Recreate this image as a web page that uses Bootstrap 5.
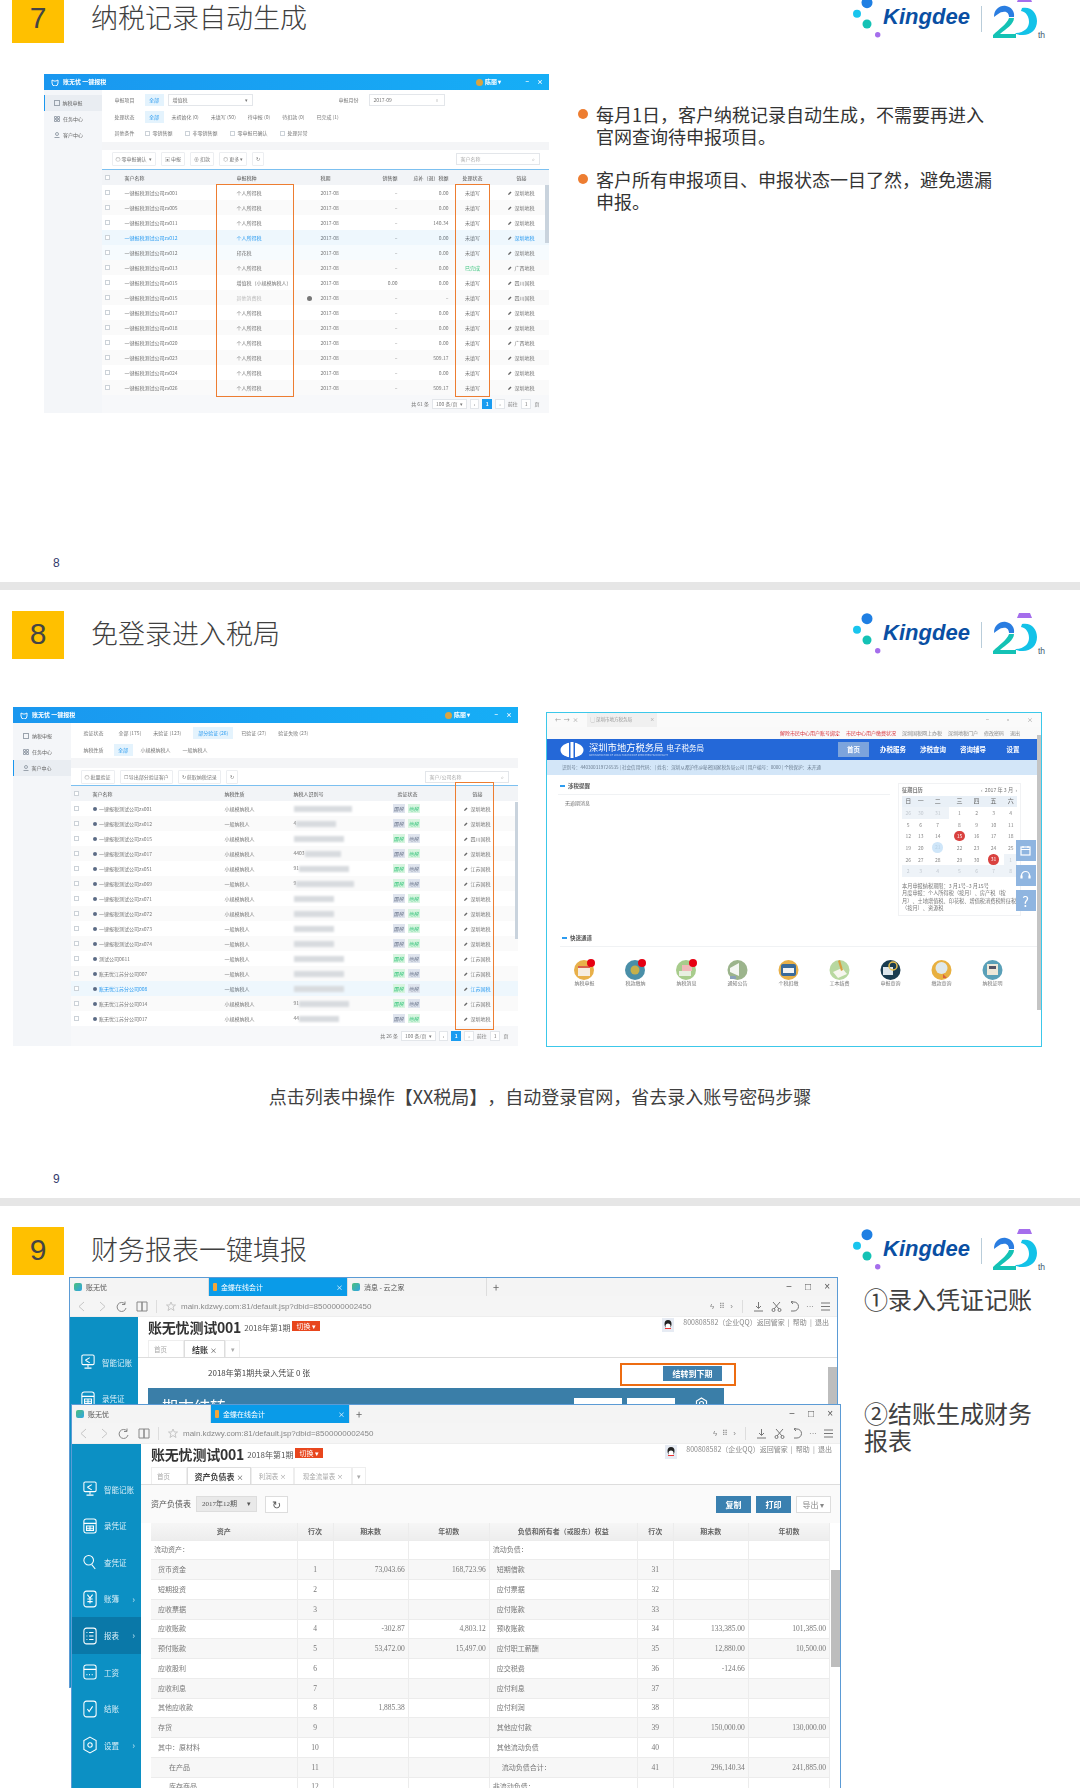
<!DOCTYPE html>
<html lang="zh-CN">
<head>
<meta charset="utf-8">
<title>Kingdee</title>
<link rel="stylesheet" href="https://cdn.jsdelivr.net/npm/bootstrap@5.3.0/dist/css/bootstrap.min.css">
<style>
html,body{background:#fff;margin:0;padding:0;overflow:hidden}
body{font-family:"Noto Sans CJK SC","Liberation Sans",sans-serif;color:#404040;text-spacing-trim:space-all}
.deck{margin-top:-26px}
.slide{height:616px;padding-top:21px;border-bottom:8px solid #e6e6e6;overflow:hidden}
.slide.last{height:582px;border-bottom:0}
.sq{width:52px;height:48px;margin-left:12px;background:#ffc000;color:#444;font:30px/46px "Liberation Sans",sans-serif;text-align:center;flex:none}
.ttl{margin:0 0 4px 27px;font-size:27px;font-weight:300;line-height:40px;color:#404040}
.logo{margin:-3px 34px 0 auto;height:41px;position:relative;left:-1px}
.kd{font:italic 700 22px/26px "Liberation Sans",sans-serif;color:#0a4fa3;margin:7px 0 0 1px;letter-spacing:0}
.lg-div{width:1px;height:26px;background:#b9cdda;margin:9px 11px 0 11px}
.lg-th{font:8.5px/10px "Liberation Sans",sans-serif;color:#3f5a70;margin:33px 0 0 1px}
.pno{font:12px/12px "Liberation Sans",sans-serif;color:#333a6b;margin:auto 0 13px 53px}
.s1 .shot{margin:31px 0 0 44px}
.blt{margin:60px 0 0 29px;width:418px;font-size:18px;line-height:22px;color:#333}
.blt li{position:relative;padding-left:18px;margin-bottom:21px}
.blt li::before{content:"";position:absolute;left:0;top:6px;width:10px;height:10px;border-radius:50%;background:#ed7d31}
.cap{margin:36px 0 0;font-size:18px;line-height:27px;text-align:center;color:#404040}
.shot{position:relative;overflow:hidden;background:#fff;color:#777;font-size:5px;line-height:1.2;filter:blur(.35px);flex:none}
.sa{width:505px;height:339px}
.sb{width:505px;height:340px;margin:48px 0 0 13px}
.sc{width:496px;height:335px;margin:53px 0 0 28px;border:1.5px solid #3cc8ea}
.bar1{height:16px;background:linear-gradient(90deg,#1a97ef,#16aef6);color:#fff;font-size:6px;font-weight:700;padding:0 6px 0 7px}
.bar1 .bico{width:8px;height:7px;fill:none;stroke:#fff;stroke-width:.9;margin-right:4px}
.bar1 .ava{width:7px;height:7px;border-radius:50%;background:#d9a441;margin:0 2px 0 auto}
.rail{width:57.5px;background:#f4f6f9;flex:none;padding-top:5px;color:#666}
.rail div{height:16px;display:flex;align-items:center;padding-left:10px;gap:3px}
.rail div.on{background:#e9edf2;border-left:1.5px solid #1a97ef;padding-left:8.5px}
.rail svg{width:6px;height:6px;fill:none;stroke:#9aa3ad}
.f-top{margin-top:2px}
.f-row{height:16.5px;display:flex;align-items:center;padding-left:13px;position:relative}
.f-row .lb{width:30px;color:#777}
.chip{background:#e4f3fd;color:#2d9cf0;padding:3px 0;width:19px;text-align:center;margin-right:8px}
.chip.wide{width:40px}
.f-row .it{margin-right:12px}
.inb{height:12px;border:1px solid #e3e6ea;padding:0 4px;display:flex;align-items:center;justify-content:space-between}
.ck{display:inline-block;width:5px;height:5px;border:.6px solid #ccd2d8;background:#fff;margin-right:3px;vertical-align:-.5px}
.gap-band{height:8px;background:#f4f5f7}
.gap-b2{height:10px}
.tb{height:20.7px;padding:0 10px;display:flex;align-items:center;gap:5px;border-bottom:.7px solid #7cc0f0}
.btn.mk{--bs-btn-padding-x:3px;--bs-btn-padding-y:0;--bs-btn-font-size:5px;--bs-btn-border-color:#eceef1;--bs-btn-color:#777;--bs-btn-border-radius:1px;--bs-btn-line-height:12px;--bs-btn-border-width:1px;height:14px;white-space:nowrap}
.srch{margin-left:auto;width:84px;height:12px;border:1px solid #e3e6ea;padding:0 4px;color:#aaa;display:flex;align-items:center;justify-content:space-between}
.tx{--bs-table-bg:transparent;table-layout:fixed;width:100%;margin:0;font-size:5px;color:#777}
.tx th,.tx td{height:15px;padding:0 3px;border:0;vertical-align:middle;white-space:nowrap;font-weight:400;overflow:hidden}
.tx thead th{background:#f2f4f7;color:#555}
.tx tbody tr:nth-child(even) td{background:#fafafa}
.tx tbody tr.hl td{background:#eef7fd;color:#2d9cf0}
.tx tbody tr.hl2 td{background:#f6fbfe}
.a1{width:20px}.a2{width:112px}.a3{width:82px}.a4{width:56px}.a5{width:29px}.a6{width:51px}.a7{width:42px}.a8{width:56px}
.b1{width:19px}.b2{width:132px}.b3{width:69px}.b4{width:88px}.b5{width:58px}.b6{width:82px}
.pl5{padding-left:5px!important}
.pen{width:4px;height:4px;fill:#666;margin-right:2px;vertical-align:-.5px}
.ok{color:#3cc57f}
.gdot{float:right;width:5px;height:5px;border-radius:50%;background:#777;margin:1px 1px 0 0}
.idot{display:inline-block;width:4.5px;height:4.5px;border-radius:50%;background:#5b6b85;margin-right:2px;vertical-align:-.5px}
.mask{display:inline-block;height:6px;background:#d8dbdf;filter:blur(1.2px);vertical-align:middle}
.m40{width:40px}.m50{width:50px}.m58{width:58px}.m36{width:36px}
.tg{display:inline-block;width:12px;height:9px;line-height:9px;text-align:center;margin-right:3px;background:#dfe4ee;color:#6f7a90}
.tg.g{background:#d8f5e0;color:#3cc57f}
.foot{background:#f7f8fa;height:18px;padding-right:10px;gap:3px}
.sb .foot{height:20px}
.foot .box{height:10px;border:1px solid #e3e6ea;background:#fff;padding:0 3px;display:flex;align-items:center}
.foot .cur{height:10px;width:10px;background:#1a9cf0;color:#fff;text-align:center;line-height:10px;font-weight:700}
.orng{position:absolute;border:1.5px solid #ed7d31;pointer-events:none}
.sbar{position:absolute;background:#c9d3dd}
.o1{left:172px;top:110px;width:77.5px;height:213px}
.o2{left:411px;top:110px;width:34.6px;height:213px}
.o3{left:442px;top:75px;width:39px;height:248px}
.sb1{right:0;top:111px;width:4px;height:58px}
.sb2{right:0;top:95px;width:3.5px;height:137px}
.r-chrome{height:14px;padding:0 8px;background:#fafafa;font-size:6px;color:#999}
.r-tab{width:70px;height:14px;background:#f0f0f0;margin-left:9px;padding:0 3px;display:flex;align-items:center;justify-content:space-between;font-size:4.5px}
.r-links{height:12px;padding-right:21px;gap:6px;background:#f9f9f9;font-size:5px;color:#888}
.r-links b{font-weight:400;color:#d9363e}
.r-nav{height:21px;background:#2468d8;color:#fff;padding-left:13px}
.r-em{width:24px;height:16px;margin-right:5px}
.r-t1{font-size:9.3px;line-height:10px;white-space:nowrap}
.r-t1 small{font-size:7.5px;margin-left:3px}
.r-en{font-size:2.5px;line-height:4px;opacity:.7;white-space:nowrap}
.r-it{width:40px;text-align:center;font-size:6.5px;font-weight:700;line-height:21px;flex:none}
.r-it.cur{background:#7ca4dc;margin:0 4px;width:31px;line-height:15px;height:15px}
.r-info{height:15px;background:#d3e6f8;padding-left:15px;font-size:4.6px;color:#6d7f92;white-space:nowrap}
.r-hd{font-size:5.5px;font-weight:700;color:#555;padding:0 0 0 2px;height:12px;border-bottom:1px solid #f0f2f4}
.r-hd i{display:inline-block;width:5px;height:2px;background:#2d9cf0;margin-right:3px;vertical-align:1px}
.r-left{padding:8px 0 0 11px}
.r-empty{padding:5px 0 0 7px}
.calw{width:123px;height:133px;margin:8px 20px 0 8px;border:1px solid #f1f2f4;padding:2px 3px;font-size:5.2px;flex:none;line-height:1.45}
.cal{width:100%;margin:2px 0 5px;font-size:5px;color:#888;--bs-table-bg:transparent}
.cal th,.cal td{padding:0;height:11.6px;text-align:center;border:0;font-weight:400;vertical-align:middle}
.cal th{background:#e9f0f7;font-size:6px;color:#666}
.cal td.m{background:#eef3f8;color:#c2c8cf}
.cal td span{display:inline-block;width:10.5px;height:10.5px;line-height:10.5px;border-radius:50%}
.cal td .rd{background:#d9413f;color:#fff}
.cal td .bl{background:#cfe6f9;color:#b9d2e6}
.qk{padding-left:13px;margin-top:19px}
.q-it{width:51px;text-align:center;flex:none;font-size:5px;color:#777;padding-top:12px}
.q-it svg{width:21px;height:21px;display:block;margin:0 auto}
.q-row{margin-left:-1px}
.flt{position:absolute;right:5.5px;width:20px;height:21px;background:#8fb5e0;color:#fff;display:flex;align-items:center;justify-content:center;font-size:14px;line-height:1}
.flt svg{width:11px;height:11px;fill:none;stroke:#fff;stroke-width:1.2}
.f1{top:127px}.f2{top:152px}.f3{top:177px}
.sb3{right:0;top:22px;width:4.5px;height:275px;background:#c4c4c4}
.wins{width:772px;margin:2px 0 0 69px;flex:none}
.win{position:relative;overflow:hidden;background:#fff;border:1px solid #5b9bd5;color:#666;filter:blur(.25px);width:769px}
.w1{height:411px}
.w2{margin:-284px 0 0 2px;width:770px}
.w2 .w-sd{width:69px}
.w-tabs{height:18px;background:#f4f4f4;font-size:7px;color:#555}
.w-tab{height:18px;padding:0 4px;width:139px;display:flex;align-items:center;gap:4px;border-right:1px solid #ddd;flex:none}
.w-tab.cur{background:#0a9be8;color:#fff;justify-content:space-between}
.w-tab em{font-style:normal;margin-left:auto}
.w-ic{width:8px;height:8px;border-radius:2px;background:linear-gradient(135deg,#4cbf7a,#2fa5e6);flex:none}
.w-ic.or{background:#f3a638;width:4px;border-radius:1px;margin-right:4px}
.w-plus{font-size:11px;line-height:18px;padding-left:6px;color:#666}
.w-ctl{margin-left:auto;gap:13px;padding-right:7px;font:10px/18px "Liberation Sans",sans-serif;color:#555}
.w-addr{height:21px;background:#f5f5f5;border-bottom:1px solid #eee;padding-left:2px;font:8px "Liberation Sans",sans-serif;color:#888;white-space:nowrap}
.w-addr>svg{width:20px;height:11px;fill:none;stroke:#888;stroke-width:1;flex:none}
.w-addr>svg.lt{stroke:#c6c6c6}
.w-addr .sp{width:1px;height:13px;background:#ddd;margin:0 4px}
.w-tools{margin-left:auto;gap:5px;padding-right:5px}
.w-tools svg{width:13px;height:11px;fill:none;stroke:#777;stroke-width:1}
.w-sd{width:68px;background:#0c90c4;flex:none;padding-top:27px;color:#d9eef7;font-size:7.5px}
.w-it{height:36.6px;display:flex;align-items:center;padding-left:11px;gap:7px;position:relative;white-space:nowrap}
.w-it.cur{background:#0a78a8}
.w-it svg{width:14px;height:18px;fill:none;stroke:#fff;stroke-width:1.2;flex:none}
.w-it u{position:absolute;right:6px;top:12px;text-decoration:none;font-size:9px;color:#bfe3f2}
.w-mn{min-width:0}
.w-hd{height:23px;padding-left:10px}
.w-nm{font-size:14px;font-weight:700;color:#333;white-space:nowrap;letter-spacing:-.2px;line-height:20px}
.w-pd{font-size:8px;margin:5px 2px 0 3px;color:#555;white-space:nowrap}
.w-sw{background:#e8461d;color:#fff;font-size:7px;height:10px;line-height:10px;padding:0 4px;margin-top:4px;white-space:nowrap}
.w-qq{width:12px;height:14px;margin:1px 9px 0 auto}
.w-lk{font-size:7px;line-height:11px;color:#888;padding-right:8px;margin-top:0;white-space:nowrap}
.w-tb{height:18px;padding-left:10px;border-bottom:1px solid #ddd;font-size:6.5px;color:#aaa}
.w-t{width:36px;height:17px;line-height:17px;text-align:center;border:1px solid #eee;border-bottom:0;background:#fff;white-space:nowrap;flex:none}
.w-t.fst{text-align:left;padding-left:5px}
.w-t.cur{font-size:8px;font-weight:700;color:#444;border-color:#ddd}
.w1 .w-body{height:30px;padding:0 0 0 70px;font-size:8px;color:#444}
.w-go{width:59px;height:15px;margin:1px 115px 0 auto;background:#3f80ad;color:#fff;font-size:8px;font-weight:700;text-align:center;line-height:15px}
.w-pan{margin-left:10px;width:576px;height:40px;background:#3a7ea8;color:#fff;font-size:16px;padding:6px 14px;position:relative}
.w-pan span{position:absolute;top:10px;width:48px;height:30px;background:#fff}
.w-pan svg{position:absolute;left:547px;top:9px;width:13px;height:13px;fill:none;stroke:#fff;stroke-width:1.2}
.o4{left:550px;top:85px;width:116px;height:23px;border:2px solid #ed6c11}
.w-sc{position:absolute;right:0;width:9px;background:#bdbdbd}
.w-sc1{top:89px;height:40px}
.w-sc2{top:126px;height:97px}
.w-t2{padding:0 0 0 10px;height:38px;background:#fafafa;font-size:8px;color:#555}
.w-sel{width:61px;height:16px;margin-left:5px;background:#e9e9e9;border:1px solid #ddd;font:7px/14px "Liberation Serif","Noto Sans CJK SC",serif;padding:0 5px;display:flex;justify-content:space-between;white-space:nowrap}
.w-rf{width:23px;height:17px;margin-left:8px;border:1px solid #ddd;background:#fff;text-align:center;line-height:15px;font-size:11px}
.w-b{width:35px;height:17px;line-height:17px;background:#3a80b0;color:#fff;text-align:center;font-weight:700;margin-left:5px}
.w-b.wt{background:#fff;border:1px solid #ddd;color:#888;font-weight:400;line-height:15px;margin-right:9px}
.fs{--bs-table-bg:transparent;table-layout:fixed;width:679px;margin:0 0 0 10px;font-size:7px;color:#777}
.fs th,.fs td{height:19.75px;padding:0 3px;border:1px solid #ececec;border-width:0 1px 1px 0;vertical-align:middle;white-space:nowrap;font-weight:400;line-height:1}
.fs th{height:17px;background:linear-gradient(#f6f6f6,#ededed);text-align:center;font-weight:700;color:#666}
.fs tbody tr:nth-child(even) td{background:#f7f7f7}
.fs td.n{text-align:right;font:7.5px "Liberation Serif",serif}
.fs td.l{text-align:center;font:7.5px "Liberation Serif",serif}
.fs .i1{padding-left:7px}.fs .i2{padding-left:18px}.fs .i3{padding-left:12px}
.c1{width:146px}.c2{width:36px}.c3{width:75px}.c4{width:81px}.c5{width:148px}
.side{margin-left:23px;padding-top:10px;width:172px;font-size:24px;line-height:27px;color:#404040}
.side p{margin:0 0 87px}
</style>
</head>
<body>
<svg class="d-none" xmlns="http://www.w3.org/2000/svg">
<symbol id="dots" viewBox="0 0 30 41"><circle cx="15" cy="5.7" r="5.5" fill="#1f7fe3"/><circle cx="5" cy="16.7" r="4" fill="#19c5ee"/><circle cx="15" cy="27" r="4.5" fill="#14c2b5"/><circle cx="25.7" cy="37.7" r="2.7" fill="#a56eec"/></symbol>
<symbol id="twenty" viewBox="0 0 44 41"><path d="M26 0h11l2 5H24z" fill="#a56eec"/><path d="M1 20C1 12 7 8 13 9c5 1 9 5 8 11l-5 0c0-3-2-6-6-5-3 0-5 2-9 5z" fill="#2a7de1"/><path d="M21 21c0 6-8 11-14 16h16v4H0v-3c6-6 14-11 16-17z" fill="#14c2b5"/><path d="M29 11c9-2 15 5 15 13 0 9-7 15-16 14-3 0-5-1-6-2 9 0 14-5 14-11 0-6-3-10-8-11z" fill="#13c2e8"/></symbol>
<symbol id="pn" viewBox="0 0 8 8"><path d="M0 8l1-3 4-4 2 2-4 4z"/></symbol>
<symbol id="bc" viewBox="0 0 8 7"><path d="M1 1l2 1h2l2-1v3a3 3 0 0 1-6 0zM3 4h0M5 4h0"/></symbol>
<symbol id="mn1" viewBox="0 0 16 20"><rect x="1" y="2" width="14" height="11" rx="1.5"/><path d="M8 13v3M4 17h8M5 8l5-3M5 8l5 3"/></symbol>
<symbol id="mn2" viewBox="0 0 16 20"><rect x="1" y="2" width="14" height="16" rx="2.5"/><path d="M1 7h14M4 10h8v5H4zM4 12.500h8M8 10v5"/></symbol>
<symbol id="mn3" viewBox="0 0 16 20"><circle cx="6.500" cy="8" r="5.500"/><path d="M10 13l4 5"/></symbol>
<symbol id="mn4" viewBox="0 0 16 20"><rect x="1" y="1" width="14" height="18" rx="3"/><path d="M5 5l3 4 3-4M8 9v6M5 10h6M5 13h6"/></symbol>
<symbol id="mn5" viewBox="0 0 16 20"><rect x="1" y="1" width="14" height="18" rx="3"/><path d="M4 6h1M7 6h5M4 10h1M7 10h5M4 14h1M7 14h5"/></symbol>
<symbol id="mn6" viewBox="0 0 16 20"><rect x="1" y="2" width="14" height="16" rx="2.500"/><path d="M1 7h14M4 13h1M7 13h1M10 13h1"/></symbol>
<symbol id="mn7" viewBox="0 0 16 20"><rect x="1" y="1" width="14" height="18" rx="3"/><path d="M5 10l2 3 4-6"/></symbol>
<symbol id="mn8" viewBox="0 0 16 20"><path d="M8 1l7 4v10l-7 4-7-4V5z"/><circle cx="8" cy="10" r="2.500"/></symbol>
<symbol id="nav-l" viewBox="0 0 20 11"><path d="M12 1L7 5.500l5 4.500"/></symbol>
<symbol id="nav-r" viewBox="0 0 20 11"><path d="M8 1l5 4.500L8 10"/></symbol>
<symbol id="nav-c" viewBox="0 0 20 11"><path d="M13 3a4.500 4.500 0 1 0 1 4M13 .5V3.500h-3"/></symbol>
<symbol id="nav-b" viewBox="0 0 20 11"><path d="M5 1h5v9H5zM10 1h5v9h-5z"/></symbol>
<symbol id="nav-s" viewBox="0 0 20 11"><path d="M10 1l1.300 3h3.200l-2.500 2 1 3.500-3-2-3 2 1-3.500-2.500-2h3.200z"/></symbol>
<symbol id="t-dl" viewBox="0 0 13 11"><path d="M6.500 1v6M4 5l2.500 2.500L9 5M2 10h9"/></symbol>
<symbol id="t-cut" viewBox="0 0 13 11"><path d="M3 1l6 7M10 1L4 8"/><circle cx="3.500" cy="9" r="1.500"/><circle cx="9.500" cy="9" r="1.500"/></symbol>
<symbol id="t-un" viewBox="0 0 13 11"><path d="M3 1h3a4 4 0 0 1 0 9H3M3 1l2-1M3 1l2 2"/></symbol>
<symbol id="t-mn" viewBox="0 0 13 11"><path d="M2 2h9M2 5.500h9M2 9h9"/></symbol>
</svg>

<div class="deck">

<section class="slide s1 d-flex flex-column">
  <header class="d-flex align-items-center">
    <div class="sq">7</div><h1 class="ttl">纳税记录自动生成</h1>
    <div class="logo d-flex align-items-start"><svg width="30" height="41"><use href="#dots"/></svg><span class="kd">Kingdee</span><i class="lg-div"></i><svg width="44" height="41"><use href="#twenty"/></svg><span class="lg-th">th</span></div>
  </header>
  <div class="d-flex align-items-start">
    <div class="shot sa">
      <div class="bar1 d-flex align-items-center"><svg class="bico"><use href="#bc"/></svg><span>账无忧 一键报税</span><i class="ava"></i><span>陈丽 ▾</span><span class="ms-4">−</span><span class="ms-2">×</span></div>
      <div class="d-flex">
        <div class="rail"><div class="on"><svg viewBox="0 0 6 6"><rect x=".5" y=".5" width="5" height="5"/></svg>纳税申报</div><div><svg viewBox="0 0 6 6"><path d="M.5.500h2v2h-2zM3.500.500h2v2h-2zM.5 3.500h2v2h-2zM3.500 3.500h2v2h-2z"/></svg>任务中心</div><div><svg viewBox="0 0 6 6"><circle cx="3" cy="2" r="1.500"/><path d="M.5 5.500h5"/></svg>客户中心</div></div>
        <div class="flex-fill">
          <div class="f-row f-top"><span class="lb">申报项目</span><span class="chip">全部</span><div class="inb" style="width:85px;margin-left:-4px"><span>增值税</span><span>▾</span></div><span class="lb" style="margin-left:auto">申报月份</span><div class="inb" style="width:76px;margin-right:105px"><span>2017-09</span><span>▫</span></div></div>
          <div class="f-row"><span class="lb">处理状态</span><span class="chip">全部</span><span class="it">未初始化 (0)</span><span class="it">未填写 (50)</span><span class="it">待申报 (0)</span><span class="it">待扣款 (0)</span><span class="it">已完成 (1)</span></div>
          <div class="f-row"><span class="lb">其他条件</span><span class="it"><i class="ck"></i>零销售额</span><span class="it"><i class="ck"></i>非零销售额</span><span class="it"><i class="ck"></i>零申报已确认</span><span class="it"><i class="ck"></i>处理异常</span></div>
          <div class="gap-band"></div>
          <div class="tb"><span class="btn mk">◎ 零申报确认 &nbsp;▾</span><span class="btn mk">▣ 申报</span><span class="btn mk">⊕ 扣款</span><span class="btn mk">◎ 更多 ▾</span><span class="btn mk">↻</span><div class="srch"><span>客户名称</span><span>⌕</span></div></div>
          <table class="table tx">
            <colgroup><col class="a1"><col class="a2"><col class="a3"><col class="a4"><col class="a5"><col class="a6"><col class="a7"><col class="a8"></colgroup>
            <thead><tr><th><i class="ck"></i></th><th>客户名称</th><th>申报税种</th><th class="pl5">税期</th><th class="text-end">销售额</th><th class="text-end">应补（退）税额</th><th class="text-center">处理状态</th><th class="text-center">链接</th></tr></thead>
            <tbody>
            <tr><td><i class="ck"></i></td><td>一键报税测试公司zs001</td><td>个人所得税</td><td class="pl5">2017-08</td><td class="text-end">–</td><td class="text-end">0.00</td><td class="text-center">未填写</td><td class="text-center"><svg class="pen"><use href="#pn"/></svg>深圳地税</td></tr>
            <tr><td><i class="ck"></i></td><td>一键报税测试公司zs005</td><td>个人所得税</td><td class="pl5">2017-08</td><td class="text-end">–</td><td class="text-end">0.00</td><td class="text-center">未填写</td><td class="text-center"><svg class="pen"><use href="#pn"/></svg>深圳地税</td></tr>
            <tr><td><i class="ck"></i></td><td>一键报税测试公司zs011</td><td>个人所得税</td><td class="pl5">2017-08</td><td class="text-end">–</td><td class="text-end">140.34</td><td class="text-center">未填写</td><td class="text-center"><svg class="pen"><use href="#pn"/></svg>深圳地税</td></tr>
            <tr class="hl"><td><i class="ck"></i></td><td>一键报税测试公司zs012</td><td>个人所得税</td><td class="pl5 text-secondary">2017-08</td><td class="text-end text-secondary">–</td><td class="text-end text-secondary">0.00</td><td class="text-center text-secondary">未填写</td><td class="text-center"><svg class="pen"><use href="#pn"/></svg>深圳地税</td></tr>
            <tr class="hl2"><td><i class="ck"></i></td><td>一键报税测试公司zs012</td><td>印花税</td><td class="pl5">2017-08</td><td class="text-end">–</td><td class="text-end">0.00</td><td class="text-center">未填写</td><td class="text-center"><svg class="pen"><use href="#pn"/></svg>深圳地税</td></tr>
            <tr><td><i class="ck"></i></td><td>一键报税测试公司zs013</td><td>个人所得税</td><td class="pl5">2017-08</td><td class="text-end">–</td><td class="text-end">0.00</td><td class="text-center ok">已完成</td><td class="text-center"><svg class="pen"><use href="#pn"/></svg>广西地税</td></tr>
            <tr><td><i class="ck"></i></td><td>一键报税测试公司zs015</td><td>增值税（小规模纳税人）</td><td class="pl5">2017-08</td><td class="text-end">0.00</td><td class="text-end">0.00</td><td class="text-center">未填写</td><td class="text-center"><svg class="pen"><use href="#pn"/></svg>四川国税</td></tr>
            <tr><td><i class="ck"></i></td><td>一键报税测试公司zs015</td><td><i class="gdot"></i><span class="opacity-50">其他消费税</span></td><td class="pl5">2017-08</td><td class="text-end">–</td><td class="text-end">–</td><td class="text-center">未填写</td><td class="text-center"><svg class="pen"><use href="#pn"/></svg>四川国税</td></tr>
            <tr><td><i class="ck"></i></td><td>一键报税测试公司zs017</td><td>个人所得税</td><td class="pl5">2017-08</td><td class="text-end">–</td><td class="text-end">0.00</td><td class="text-center">未填写</td><td class="text-center"><svg class="pen"><use href="#pn"/></svg>深圳地税</td></tr>
            <tr><td><i class="ck"></i></td><td>一键报税测试公司zs018</td><td>个人所得税</td><td class="pl5">2017-08</td><td class="text-end">–</td><td class="text-end">0.00</td><td class="text-center">未填写</td><td class="text-center"><svg class="pen"><use href="#pn"/></svg>深圳地税</td></tr>
            <tr><td><i class="ck"></i></td><td>一键报税测试公司zs020</td><td>个人所得税</td><td class="pl5">2017-08</td><td class="text-end">–</td><td class="text-end">0.00</td><td class="text-center">未填写</td><td class="text-center"><svg class="pen"><use href="#pn"/></svg>广西地税</td></tr>
            <tr><td><i class="ck"></i></td><td>一键报税测试公司zs023</td><td>个人所得税</td><td class="pl5">2017-08</td><td class="text-end">–</td><td class="text-end">509.17</td><td class="text-center">未填写</td><td class="text-center"><svg class="pen"><use href="#pn"/></svg>深圳地税</td></tr>
            <tr><td><i class="ck"></i></td><td>一键报税测试公司zs024</td><td>个人所得税</td><td class="pl5">2017-08</td><td class="text-end">–</td><td class="text-end">0.00</td><td class="text-center">未填写</td><td class="text-center"><svg class="pen"><use href="#pn"/></svg>深圳地税</td></tr>
            <tr><td><i class="ck"></i></td><td>一键报税测试公司zs026</td><td>个人所得税</td><td class="pl5">2017-08</td><td class="text-end">–</td><td class="text-end">509.17</td><td class="text-center">未填写</td><td class="text-center"><svg class="pen"><use href="#pn"/></svg>深圳地税</td></tr>
            </tbody>
          </table>
          <div class="foot d-flex align-items-center justify-content-end"><span>共 61 条</span><span class="box">100 条/页 &nbsp;▾</span><span class="box">‹</span><span class="cur">1</span><span class="box">›</span><span>前往</span><span class="box">1</span><span>页</span></div>
        </div>
      </div>
      <i class="orng o1"></i><i class="orng o2"></i><i class="sbar sb1"></i>
    </div>
    <ul class="blt list-unstyled">
      <li>每月1日，客户纳税记录自动生成，不需要再进入官网查询待申报项目。</li>
      <li>客户所有申报项目、申报状态一目了然，避免遗漏申报。</li>
    </ul>
  </div>
  <div class="pno">8</div>
</section>

<section class="slide s2 d-flex flex-column">
  <header class="d-flex align-items-center">
    <div class="sq">8</div><h1 class="ttl">免登录进入税局</h1>
    <div class="logo d-flex align-items-start"><svg width="30" height="41"><use href="#dots"/></svg><span class="kd">Kingdee</span><i class="lg-div"></i><svg width="44" height="41"><use href="#twenty"/></svg><span class="lg-th">th</span></div>
  </header>
  <div class="d-flex align-items-start">
    <div class="shot sb">
      <div class="bar1 d-flex align-items-center"><svg class="bico"><use href="#bc"/></svg><span>账无忧 一键报税</span><i class="ava"></i><span>陈丽 ▾</span><span class="ms-4">−</span><span class="ms-2">×</span></div>
      <div class="d-flex">
        <div class="rail"><div><svg viewBox="0 0 6 6"><rect x=".5" y=".5" width="5" height="5"/></svg>纳税申报</div><div><svg viewBox="0 0 6 6"><path d="M.5.500h2v2h-2zM3.500.500h2v2h-2zM.5 3.500h2v2h-2zM3.500 3.500h2v2h-2z"/></svg>任务中心</div><div class="on"><svg viewBox="0 0 6 6"><circle cx="3" cy="2" r="1.500"/><path d="M.5 5.500h5"/></svg>客户中心</div></div>
        <div class="flex-fill">
          <div class="f-row f-top"><span class="lb" style="width:35px">验证状态</span><span class="it">全部 (175)</span><span class="it">未验证 (123)</span><span class="chip wide">部分验证 (26)</span><span class="it">已验证 (27)</span><span class="it">验证失败 (23)</span></div>
          <div class="f-row"><span class="lb">纳税性质</span><span class="chip">全部</span><span class="it">小规模纳税人</span><span class="it">一般纳税人</span></div>
          <div class="gap-band gap-b2"></div>
          <div class="tb" style="height:18px"><span class="btn mk">◎ 批量验证</span><span class="btn mk">☐ 导出部分验证客户</span><span class="btn mk">↻ 获取纳税记录</span><span class="btn mk">↻</span><div class="srch"><span>客户/公司名称</span><span>⌕</span></div></div>
          <table class="table tx">
            <colgroup><col class="b1"><col class="b2"><col class="b3"><col class="b4"><col class="b5"><col class="b6"></colgroup>
            <thead><tr><th><i class="ck"></i></th><th>客户名称</th><th>纳税性质</th><th>纳税人识别号</th><th class="text-center">验证状态</th><th class="text-center">链接</th></tr></thead>
            <tbody>
            <tr><td><i class="ck"></i></td><td><i class="idot"></i>一键报税测试公司zs001</td><td>小规模纳税人</td><td><i class="mask m58"></i></td><td class="text-center"><i class="tg">国税</i><i class="tg g">地税</i></td><td class="text-center"><svg class="pen"><use href="#pn"/></svg>深圳地税</td></tr>
            <tr><td><i class="ck"></i></td><td><i class="idot"></i>一键报税测试公司zs012</td><td>一般纳税人</td><td>4<i class="mask m40"></i></td><td class="text-center"><i class="tg">国税</i><i class="tg g">地税</i></td><td class="text-center"><svg class="pen"><use href="#pn"/></svg>深圳地税</td></tr>
            <tr><td><i class="ck"></i></td><td><i class="idot"></i>一键报税测试公司zs015</td><td>小规模纳税人</td><td><i class="mask m50"></i></td><td class="text-center"><i class="tg g">国税</i><i class="tg">地税</i></td><td class="text-center"><svg class="pen"><use href="#pn"/></svg>四川国税</td></tr>
            <tr><td><i class="ck"></i></td><td><i class="idot"></i>一键报税测试公司zs017</td><td>小规模纳税人</td><td>4403<i class="mask m36"></i></td><td class="text-center"><i class="tg">国税</i><i class="tg g">地税</i></td><td class="text-center"><svg class="pen"><use href="#pn"/></svg>深圳地税</td></tr>
            <tr><td><i class="ck"></i></td><td><i class="idot"></i>一键报税测试公司zs051</td><td>小规模纳税人</td><td>91<i class="mask m50"></i></td><td class="text-center"><i class="tg g">国税</i><i class="tg">地税</i></td><td class="text-center"><svg class="pen"><use href="#pn"/></svg>江苏国税</td></tr>
            <tr><td><i class="ck"></i></td><td><i class="idot"></i>一键报税测试公司zs069</td><td>一般纳税人</td><td>9<i class="mask m58"></i></td><td class="text-center"><i class="tg g">国税</i><i class="tg">地税</i></td><td class="text-center"><svg class="pen"><use href="#pn"/></svg>江苏国税</td></tr>
            <tr><td><i class="ck"></i></td><td><i class="idot"></i>一键报税测试公司zs071</td><td>小规模纳税人</td><td><i class="mask m40"></i></td><td class="text-center"><i class="tg">国税</i><i class="tg g">地税</i></td><td class="text-center"><svg class="pen"><use href="#pn"/></svg>深圳地税</td></tr>
            <tr><td><i class="ck"></i></td><td><i class="idot"></i>一键报税测试公司zs072</td><td>小规模纳税人</td><td><i class="mask m40"></i></td><td class="text-center"><i class="tg">国税</i><i class="tg g">地税</i></td><td class="text-center"><svg class="pen"><use href="#pn"/></svg>深圳地税</td></tr>
            <tr><td><i class="ck"></i></td><td><i class="idot"></i>一键报税测试公司zs073</td><td>一般纳税人</td><td><i class="mask m40"></i></td><td class="text-center"><i class="tg">国税</i><i class="tg g">地税</i></td><td class="text-center"><svg class="pen"><use href="#pn"/></svg>深圳地税</td></tr>
            <tr><td><i class="ck"></i></td><td><i class="idot"></i>一键报税测试公司zs074</td><td>一般纳税人</td><td><i class="mask m40"></i></td><td class="text-center"><i class="tg">国税</i><i class="tg g">地税</i></td><td class="text-center"><svg class="pen"><use href="#pn"/></svg>深圳地税</td></tr>
            <tr><td><i class="ck"></i></td><td><i class="idot"></i>测试公司0611</td><td>一般纳税人</td><td><i class="mask m50"></i></td><td class="text-center"><i class="tg g">国税</i><i class="tg">地税</i></td><td class="text-center"><svg class="pen"><use href="#pn"/></svg>江苏国税</td></tr>
            <tr><td><i class="ck"></i></td><td><i class="idot"></i>账无忧江苏分公司007</td><td>一般纳税人</td><td><i class="mask m50"></i></td><td class="text-center"><i class="tg g">国税</i><i class="tg">地税</i></td><td class="text-center"><svg class="pen"><use href="#pn"/></svg>江苏国税</td></tr>
            <tr class="hl"><td><i class="ck"></i></td><td><i class="idot"></i>账无忧江苏分公司008</td><td class="text-secondary">一般纳税人</td><td><i class="mask m50"></i></td><td class="text-center"><i class="tg g">国税</i><i class="tg">地税</i></td><td class="text-center"><svg class="pen"><use href="#pn"/></svg>江苏国税</td></tr>
            <tr><td><i class="ck"></i></td><td><i class="idot"></i>账无忧江苏分公司014</td><td>小规模纳税人</td><td>91<i class="mask m50"></i></td><td class="text-center"><i class="tg g">国税</i><i class="tg">地税</i></td><td class="text-center"><svg class="pen"><use href="#pn"/></svg>江苏国税</td></tr>
            <tr><td><i class="ck"></i></td><td><i class="idot"></i>账无忧江苏分公司017</td><td>小规模纳税人</td><td>44<i class="mask m40"></i></td><td class="text-center"><i class="tg">国税</i><i class="tg g">地税</i></td><td class="text-center"><svg class="pen"><use href="#pn"/></svg>深圳地税</td></tr>
            </tbody>
          </table>
          <div class="foot d-flex align-items-center justify-content-end"><span>共 26 条</span><span class="box">100 条/页 &nbsp;▾</span><span class="box">‹</span><span class="cur">1</span><span class="box">›</span><span>前往</span><span class="box">1</span><span>页</span></div>
        </div>
      </div>
      <i class="orng o3"></i><i class="sbar sb2"></i>
    </div>
    <div class="shot sc">
      <div class="r-chrome d-flex align-items-center"><span>← &nbsp;→ &nbsp;×</span><div class="r-tab"><span>▢ 深圳市地方税务局</span><span>×</span></div><span class="ms-auto">−</span><span class="ms-3">▫</span><span class="ms-3">×</span></div>
      <div class="r-links d-flex align-items-center justify-content-end"><b>解除市民中心用户账号绑定</b><b>市民中心用户缴费状况</b><span>深圳国税网上办税</span><span>深圳地税门户</span><span>修改密码</span><span>退出</span></div>
      <div class="r-nav d-flex align-items-center">
        <svg class="r-em" viewBox="0 0 24 16"><ellipse cx="12" cy="8" rx="11.500" ry="7.500" fill="#fff"/><rect x="9" y="0" width="6" height="16" fill="#2468d8"/><rect x="10.500" y="0" width="3" height="16" fill="#fff"/></svg>
        <div><div class="r-t1">深圳市地方税务局<small>电子税务局</small></div><div class="r-en">ADMINISTRATION OF LOCAL TAXATION OF SHENZHEN MUNICIPALITY</div></div>
        <div class="r-it cur ms-auto">首页</div><div class="r-it">办税服务</div><div class="r-it">涉税查询</div><div class="r-it">咨询辅导</div><div class="r-it me-2">设置</div>
      </div>
      <div class="r-info d-flex align-items-center">识别号：440300319726535 | 社会信用代码： | 姓名：深圳从都沪伟@秘密国家税务局公司 | 用户编号：0000 | 个税保护：未开通</div>
      <div class="d-flex">
        <div class="flex-fill r-left"><div class="r-hd"><i></i>涉税提醒</div><div class="r-empty">无逾期消息</div></div>
        <div class="calw">
          <div class="d-flex justify-content-between fw-bold"><span>征期日历</span><span class="fw-normal">‹ &nbsp;2017 年 3 月 &nbsp;›</span></div>
          <table class="table cal">
            <thead><tr><th>日</th><th>一</th><th>二</th><th>三</th><th>四</th><th>五</th><th>六</th></tr></thead>
            <tbody>
            <tr><td class="m">26</td><td class="m">30</td><td class="m">31</td><td>1</td><td>2</td><td>3</td><td>4</td></tr>
            <tr><td>5</td><td>6</td><td>7</td><td>8</td><td>9</td><td>10</td><td>11</td></tr>
            <tr><td>12</td><td>13</td><td>14</td><td><span class="rd">15</span></td><td>16</td><td>17</td><td>18</td></tr>
            <tr><td>19</td><td>20</td><td><span class="bl">21</span></td><td>22</td><td>23</td><td>24</td><td>25</td></tr>
            <tr><td>26</td><td>27</td><td>28</td><td>29</td><td>30</td><td><span class="rd">31</span></td><td class="m">1</td></tr>
            <tr><td class="m">2</td><td class="m">3</td><td class="m">4</td><td class="m">5</td><td class="m">6</td><td class="m">7</td><td class="m">8</td></tr>
            </tbody>
          </table>
          <div>本月申报纳税期限：3 月1号–3 月15号</div>
          <div>月度申报：个人所得税（按月）、房产税（按月）、土地增值税、印花税、增值税消费税附征税（按月）、资源税</div>
        </div>
      </div>
      <div class="qk">
        <div class="r-hd"><i></i>快速通道</div>
        <div class="q-row d-flex">
          <div class="q-it"><svg viewBox="0 0 21 21"><circle cx="10" cy="11" r="10" fill="#e8b04a"/><rect x="4" y="7" width="12" height="10" fill="#f6ece0"/><rect x="4" y="7" width="12" height="2" fill="#d8604c"/><circle cx="17" cy="4" r="4" fill="#e60012"/></svg>纳税申报</div>
          <div class="q-it"><svg viewBox="0 0 21 21"><circle cx="10" cy="11" r="10" fill="#4a8fa8"/><circle cx="10" cy="11" r="4.500" fill="#c6b04a"/><circle cx="17" cy="4" r="4" fill="#e60012"/></svg>税款缴纳</div>
          <div class="q-it"><svg viewBox="0 0 21 21"><circle cx="10" cy="11" r="10" fill="#a8cc8c"/><rect x="6" y="6" width="10" height="6" fill="#f0b8b8"/><rect x="3" y="12" width="12" height="5" fill="#e8efe0"/><circle cx="17" cy="4" r="4" fill="#e60012"/></svg>纳税消息</div>
          <div class="q-it"><svg viewBox="0 0 21 21"><circle cx="10.500" cy="11" r="10" fill="#9cb48c"/><path d="M3 9l9-5v13L3 13z" fill="#f4f6f2"/><path d="M3 17h6v3H3z" fill="#8aa0b8"/></svg>通知公告</div>
          <div class="q-it"><svg viewBox="0 0 21 21"><circle cx="10.500" cy="11" r="10" fill="#e8b048"/><rect x="3" y="5" width="15" height="12" rx="2" fill="#3a6a9a"/><rect x="5" y="9" width="11" height="5" fill="#f4f4f4"/></svg>个税扣缴</div>
          <div class="q-it"><svg viewBox="0 0 21 21"><circle cx="10.500" cy="11" r="10" fill="#b8d8a0"/><path d="M4 13l9-4 5 6-9 4z" fill="#f6f6ee"/><path d="M9 2l2-1 3 10-2 1z" fill="#d8a040"/></svg>工本结费</div>
          <div class="q-it"><svg viewBox="0 0 21 21"><circle cx="10.500" cy="11" r="10" fill="#1a3c50"/><rect x="3" y="8" width="10" height="8" fill="#dde6ec"/><circle cx="13" cy="7" r="4" fill="none" stroke="#e8c050" stroke-width="1.500"/></svg>申报查询</div>
          <div class="q-it"><svg viewBox="0 0 21 21"><circle cx="10.500" cy="11" r="10" fill="#e8b040"/><circle cx="10.500" cy="9" r="6" fill="#dfe8ea"/><path d="M12 15l4 4h-4z" fill="#d86040"/></svg>缴款查询</div>
          <div class="q-it"><svg viewBox="0 0 21 21"><circle cx="10.500" cy="11" r="10" fill="#5aa0b8"/><rect x="5" y="5" width="11" height="11" fill="#eee8d8"/><rect x="7" y="7" width="7" height="3" fill="#556"/></svg>纳税证明</div>
        </div>
      </div>
      <div class="flt f1"><svg viewBox="0 0 11 11"><rect x="1" y="2" width="9" height="8"/><path d="M1 4.500h9M3 1v2M8 1v2"/></svg></div>
      <div class="flt f2"><svg viewBox="0 0 11 11"><path d="M1.500 7V5.500a4 4 0 0 1 8 0V7M1 6h1v2H1zM9 6h1v2H9z"/></svg></div>
      <div class="flt f3">?</div>
      <i class="sbar sb3"></i>
    </div>
  </div>
  <p class="cap">点击列表中操作【XX税局】，自动登录官网，省去录入账号密码步骤</p>
  <div class="pno">9</div>
</section>

<section class="slide last s3 d-flex flex-column">
  <header class="d-flex align-items-center">
    <div class="sq">9</div><h1 class="ttl">财务报表一键填报</h1>
    <div class="logo d-flex align-items-start"><svg width="30" height="41"><use href="#dots"/></svg><span class="kd">Kingdee</span><i class="lg-div"></i><svg width="44" height="41"><use href="#twenty"/></svg><span class="lg-th">th</span></div>
  </header>
  <div class="d-flex align-items-start">
    <div class="wins">
      <div class="win w1">
        <div class="w-tabs d-flex"><div class="w-tab"><i class="w-ic"></i>账无忧</div><div class="w-tab cur"><span class="d-flex align-items-center"><i class="w-ic or"></i>金蝶在线会计</span><span>×</span></div><div class="w-tab"><i class="w-ic"></i>消息 - 云之家</div><span class="w-plus">+</span><div class="w-ctl d-flex"><span>−</span><span>□</span><span>×</span></div></div>
        <div class="w-addr d-flex align-items-center"><svg class="lt"><use href="#nav-l"/></svg><svg class="lt"><use href="#nav-r"/></svg><svg><use href="#nav-c"/></svg><svg><use href="#nav-b"/></svg><i class="sp"></i><svg class="lt"><use href="#nav-s"/></svg><span>main.kdzwy.com:81/default.jsp?dbid=8500000002450</span><div class="w-tools d-flex align-items-center"><span>ϟ</span><span>⠿</span><span>›</span><i class="sp"></i><svg><use href="#t-dl"/></svg><svg><use href="#t-cut"/></svg><svg><use href="#t-un"/></svg><span>···</span><svg><use href="#t-mn"/></svg></div></div>
        <div class="d-flex h-100">
          <div class="w-sd"><div class="w-it"><svg><use href="#mn1"/></svg>智能记账</div><div class="w-it"><svg><use href="#mn2"/></svg>录凭证</div><div class="w-it"><svg><use href="#mn3"/></svg>查凭证</div></div>
          <div class="w-mn flex-fill">
            <div class="w-hd d-flex"><span class="w-nm">账无忧测试001</span><span class="w-pd">2018年第1期</span><span class="w-sw">切换 ▾</span><svg class="w-qq" viewBox="0 0 12 14"><rect width="12" height="14" fill="#e6ebf3"/><ellipse cx="6" cy="6" rx="3.500" ry="4" fill="#222"/><ellipse cx="6" cy="8" rx="2.500" ry="2.500" fill="#fff"/><path d="M3 10h6v1H3z" fill="#e33"/></svg><span class="w-lk">800808582（企业QQ）返回管家 &nbsp;|&nbsp; 帮助 &nbsp;|&nbsp; 退出</span></div>
            <div class="w-tb d-flex"><span class="w-t fst">首页</span><span class="w-t cur" style="width:41px">结账 <small class="fw-normal">×</small></span><span class="w-t" style="width:15px">▾</span></div>
            <div class="w-body d-flex align-items-center"><span>2018年第1期共录入凭证 0 张</span><span class="w-go">结转到下期</span></div>
            <div class="w-pan">期末结转<span style="left:426px"></span><span style="left:479px"></span><svg viewBox="0 0 13 13"><path d="M6.500 1l5 3v5l-5 3-5-3V4z"/><circle cx="6.500" cy="6.500" r="2"/></svg></div>
          </div>
        </div>
        <i class="orng o4"></i><i class="w-sc w-sc1"></i>
      </div>
      <div class="win w2">
        <div class="w-tabs d-flex"><div class="w-tab"><i class="w-ic"></i>账无忧</div><div class="w-tab cur"><span class="d-flex align-items-center"><i class="w-ic or"></i>金蝶在线会计</span><span>×</span></div><span class="w-plus">+</span><div class="w-ctl d-flex"><span>−</span><span>□</span><span>×</span></div></div>
        <div class="w-addr d-flex align-items-center"><svg class="lt"><use href="#nav-l"/></svg><svg class="lt"><use href="#nav-r"/></svg><svg><use href="#nav-c"/></svg><svg><use href="#nav-b"/></svg><i class="sp"></i><svg class="lt"><use href="#nav-s"/></svg><span>main.kdzwy.com:81/default.jsp?dbid=8500000002450</span><div class="w-tools d-flex align-items-center"><span>ϟ</span><span>⠿</span><span>›</span><i class="sp"></i><svg><use href="#t-dl"/></svg><svg><use href="#t-cut"/></svg><svg><use href="#t-un"/></svg><span>···</span><svg><use href="#t-mn"/></svg></div></div>
        <div class="d-flex">
          <div class="w-sd">
            <div class="w-it"><svg><use href="#mn1"/></svg>智能记账</div>
            <div class="w-it"><svg><use href="#mn2"/></svg>录凭证</div>
            <div class="w-it"><svg><use href="#mn3"/></svg>查凭证</div>
            <div class="w-it"><svg><use href="#mn4"/></svg>账簿<u>›</u></div>
            <div class="w-it cur"><svg><use href="#mn5"/></svg>报表<u>›</u></div>
            <div class="w-it"><svg><use href="#mn6"/></svg>工资</div>
            <div class="w-it"><svg><use href="#mn7"/></svg>结账</div>
            <div class="w-it"><svg><use href="#mn8"/></svg>设置<u>›</u></div>
          </div>
          <div class="w-mn flex-fill position-relative">
            <div class="w-hd d-flex"><span class="w-nm">账无忧测试001</span><span class="w-pd">2018年第1期</span><span class="w-sw">切换 ▾</span><svg class="w-qq" viewBox="0 0 12 14"><rect width="12" height="14" fill="#e6ebf3"/><ellipse cx="6" cy="6" rx="3.500" ry="4" fill="#222"/><ellipse cx="6" cy="8" rx="2.500" ry="2.500" fill="#fff"/><path d="M3 10h6v1H3z" fill="#e33"/></svg><span class="w-lk">800808582（企业QQ）返回管家 &nbsp;|&nbsp; 帮助 &nbsp;|&nbsp; 退出</span></div>
            <div class="w-tb d-flex"><span class="w-t fst">首页</span><span class="w-t cur" style="width:64px">资产负债表 <small class="fw-normal">×</small></span><span class="w-t" style="width:43px">利润表 ×</span><span class="w-t" style="width:58px">现金流量表 ×</span><span class="w-t" style="width:14px">▾</span></div>
            <div class="w-t2 d-flex align-items-center"><span>资产负债表</span><span class="w-sel"><span>2017年12期</span><span>▾</span></span><span class="w-rf">↻</span><span class="w-b ms-auto">复制</span><span class="w-b">打印</span><span class="w-b wt">导出 ▾</span></div>
            <table class="table fs">
              <colgroup><col class="c1"><col class="c2"><col class="c3"><col class="c4"><col class="c5"><col class="c2"><col class="c3"><col class="c4"></colgroup>
              <thead><tr><th>资产</th><th>行次</th><th>期末数</th><th>年初数</th><th>负债和所有者（或股东）权益</th><th>行次</th><th>期末数</th><th>年初数</th></tr></thead>
              <tbody>
              <tr><td>流动资产：</td><td class="l"></td><td class="n"></td><td class="n"></td><td>流动负债：</td><td class="l"></td><td class="n"></td><td class="n"></td></tr>
              <tr><td class="i1">货币资金</td><td class="l">1</td><td class="n">73,043.66</td><td class="n">168,723.96</td><td class="i1">短期借款</td><td class="l">31</td><td class="n"></td><td class="n"></td></tr>
              <tr><td class="i1">短期投资</td><td class="l">2</td><td class="n"></td><td class="n"></td><td class="i1">应付票据</td><td class="l">32</td><td class="n"></td><td class="n"></td></tr>
              <tr><td class="i1">应收票据</td><td class="l">3</td><td class="n"></td><td class="n"></td><td class="i1">应付账款</td><td class="l">33</td><td class="n"></td><td class="n"></td></tr>
              <tr><td class="i1">应收账款</td><td class="l">4</td><td class="n">-302.87</td><td class="n">4,803.12</td><td class="i1">预收账款</td><td class="l">34</td><td class="n">133,385.00</td><td class="n">101,385.00</td></tr>
              <tr><td class="i1">预付账款</td><td class="l">5</td><td class="n">53,472.00</td><td class="n">15,497.00</td><td class="i1">应付职工薪酬</td><td class="l">35</td><td class="n">12,880.00</td><td class="n">10,500.00</td></tr>
              <tr><td class="i1">应收股利</td><td class="l">6</td><td class="n"></td><td class="n"></td><td class="i1">应交税费</td><td class="l">36</td><td class="n">-124.66</td><td class="n"></td></tr>
              <tr><td class="i1">应收利息</td><td class="l">7</td><td class="n"></td><td class="n"></td><td class="i1">应付利息</td><td class="l">37</td><td class="n"></td><td class="n"></td></tr>
              <tr><td class="i1">其他应收款</td><td class="l">8</td><td class="n">1,885.38</td><td class="n"></td><td class="i1">应付利润</td><td class="l">38</td><td class="n"></td><td class="n"></td></tr>
              <tr><td class="i1">存货</td><td class="l">9</td><td class="n"></td><td class="n"></td><td class="i1">其他应付款</td><td class="l">39</td><td class="n">150,000.00</td><td class="n">130,000.00</td></tr>
              <tr><td class="i1">其中：原材料</td><td class="l">10</td><td class="n"></td><td class="n"></td><td class="i1">其他流动负债</td><td class="l">40</td><td class="n"></td><td class="n"></td></tr>
              <tr><td class="i2">在产品</td><td class="l">11</td><td class="n"></td><td class="n"></td><td class="i3">流动负债合计：</td><td class="l">41</td><td class="n">296,140.34</td><td class="n">241,885.00</td></tr>
              <tr><td class="i2">库存商品</td><td class="l">12</td><td class="n"></td><td class="n"></td><td>非流动负债：</td><td class="l"></td><td class="n"></td><td class="n"></td></tr>
              </tbody>
            </table>
            <i class="w-sc w-sc2"></i>
          </div>
        </div>
      </div>
    </div>
    <div class="side"><p>①录入凭证记账</p><p>②结账生成财务报表</p></div>
  </div>
</section>

</div>
<script src="https://cdn.jsdelivr.net/npm/bootstrap@5.3.0/dist/js/bootstrap.bundle.min.js"></script>
</body>
</html>
